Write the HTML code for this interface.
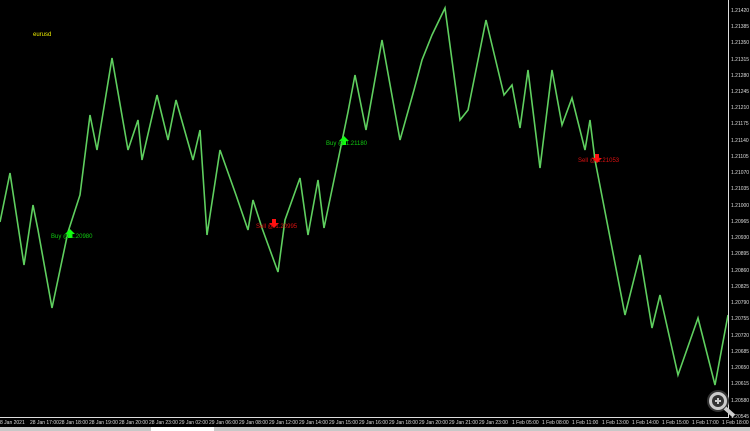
<!DOCTYPE html>
<html><head><meta charset="utf-8"><style>
html,body{margin:0;padding:0;background:#000;width:750px;height:431px;overflow:hidden;font-family:"Liberation Sans",sans-serif}
.p{position:absolute;left:731px;font-size:5px;color:#ddd}
.t{position:absolute;top:420px;font-size:5px;color:#ddd;white-space:nowrap}
</style></head><body>
<svg width="750" height="431" style="position:absolute;left:0;top:0">
<rect x="0" y="0" width="750" height="431" fill="#000"/>
<polyline fill="none" stroke="#5fcf5f" stroke-width="1.6" points="0,222 10,173 24,265 33,205 38,230 52,308 68,232 80,195 90,115 97,150 112,58 128,150 138,120 142,160 157,95 168,140 176,100 193,160 200,130 207,235 220,150 236,195 248,230 253,200 262,228 278,272 285,220 300,178 308,235 318,180 324,228 334,180 348,112 355,75 366,130 382,40 400,140 414,90 422,60 432,35 445,8 460,120 468,110 486,20 504,95 512,85 520,128 528,70 540,168 552,70 562,125 572,98 585,150 590,120 595,160 625,315 640,255 652,328 660,295 678,375 698,318 715,385 728,315"/>
<line x1="728.5" y1="0" x2="728.5" y2="418" stroke="#ddd" stroke-width="1"/>
<line x1="0" y1="417.5" x2="729" y2="417.5" stroke="#ddd" stroke-width="1"/>
<rect x="0" y="427" width="750" height="4" fill="#c8c8c8"/>
<rect x="151" y="427" width="63" height="4" fill="#fff"/>
<path d="M70,229 l-5,5 h3 v4 h4 v-4 h3 z" fill="#1f1"/>
<path d="M344,136 l-5,5 h3 v4 h4 v-4 h3 z" fill="#1f1"/>
<path d="M274,228 l-5,-5 h3 v-4 h4 v4 h3 z" fill="#f11"/>
<path d="M597,163 l-5,-5 h3 v-4 h4 v4 h3 z" fill="#f11"/>
<circle cx="718" cy="401" r="10" fill="#ccc" stroke="#333" stroke-width="2"/>
<circle cx="718" cy="401" r="6" fill="#333"/>
<path d="M715,401h6M718,398v6" stroke="#ccc" stroke-width="2"/>
<line x1="725" y1="408" x2="734" y2="416" stroke="#ccc" stroke-width="4"/>
</svg>
<div style="position:absolute;left:33px;top:32px;font-size:6px;color:#ee0">eurusd</div>
<div style="position:absolute;left:51px;top:234px;font-size:6px;color:#1c1">Buy @ 1.20980</div>
<div style="position:absolute;left:326px;top:141px;font-size:6px;color:#1c1">Buy @ 1.21180</div>
<div style="position:absolute;left:256px;top:224px;font-size:6px;color:#d11">Sell @ 1.20995</div>
<div style="position:absolute;left:578px;top:158px;font-size:6px;color:#d11">Sell @ 1.21053</div>
<div class="p" style="top:8px">1.21420</div>
<div class="p" style="top:24px">1.21385</div>
<div class="p" style="top:40px">1.21350</div>
<div class="p" style="top:57px">1.21315</div>
<div class="p" style="top:73px">1.21280</div>
<div class="p" style="top:89px">1.21245</div>
<div class="p" style="top:105px">1.21210</div>
<div class="p" style="top:121px">1.21175</div>
<div class="p" style="top:138px">1.21140</div>
<div class="p" style="top:154px">1.21105</div>
<div class="p" style="top:170px">1.21070</div>
<div class="p" style="top:186px">1.21035</div>
<div class="p" style="top:203px">1.21000</div>
<div class="p" style="top:219px">1.20965</div>
<div class="p" style="top:235px">1.20930</div>
<div class="p" style="top:251px">1.20895</div>
<div class="p" style="top:268px">1.20860</div>
<div class="p" style="top:284px">1.20825</div>
<div class="p" style="top:300px">1.20790</div>
<div class="p" style="top:316px">1.20755</div>
<div class="p" style="top:333px">1.20720</div>
<div class="p" style="top:349px">1.20685</div>
<div class="p" style="top:365px">1.20650</div>
<div class="p" style="top:381px">1.20615</div>
<div class="p" style="top:398px">1.20580</div>
<div class="p" style="top:414px">1.20545</div>
<div class="t" style="left:0px">8 Jan 2021</div>
<div class="t" style="left:30px">28 Jan 17:00</div>
<div class="t" style="left:59px">28 Jan 18:00</div>
<div class="t" style="left:89px">28 Jan 19:00</div>
<div class="t" style="left:119px">28 Jan 20:00</div>
<div class="t" style="left:149px">28 Jan 23:00</div>
<div class="t" style="left:179px">29 Jan 02:00</div>
<div class="t" style="left:209px">29 Jan 06:00</div>
<div class="t" style="left:239px">29 Jan 08:00</div>
<div class="t" style="left:269px">29 Jan 12:00</div>
<div class="t" style="left:299px">29 Jan 14:00</div>
<div class="t" style="left:329px">29 Jan 15:00</div>
<div class="t" style="left:359px">29 Jan 16:00</div>
<div class="t" style="left:389px">29 Jan 18:00</div>
<div class="t" style="left:419px">29 Jan 20:00</div>
<div class="t" style="left:449px">29 Jan 21:00</div>
<div class="t" style="left:479px">29 Jan 23:00</div>
<div class="t" style="left:512px">1 Feb 05:00</div>
<div class="t" style="left:542px">1 Feb 08:00</div>
<div class="t" style="left:572px">1 Feb 11:00</div>
<div class="t" style="left:602px">1 Feb 13:00</div>
<div class="t" style="left:632px">1 Feb 14:00</div>
<div class="t" style="left:662px">1 Feb 15:00</div>
<div class="t" style="left:692px">1 Feb 17:00</div>
<div class="t" style="left:722px">1 Feb 18:00</div>
</body></html>
